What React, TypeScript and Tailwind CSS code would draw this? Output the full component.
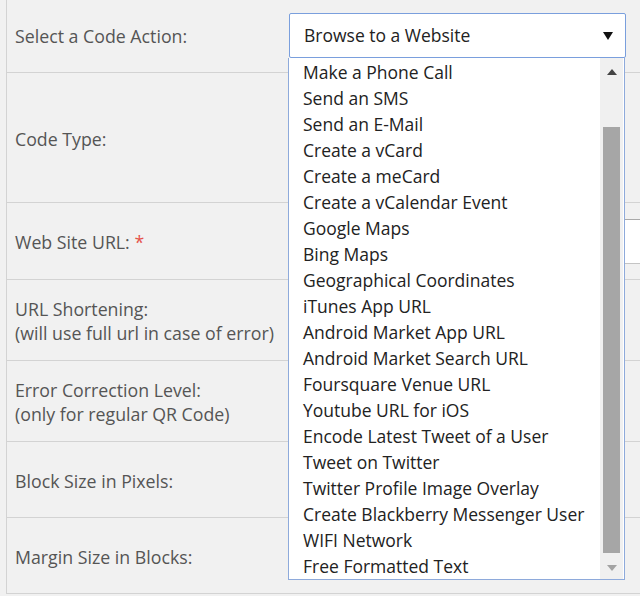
import React from 'react';

const actions = [
  'Make a Phone Call',
  'Send an SMS',
  'Send an E-Mail',
  'Create a vCard',
  'Create a meCard',
  'Create a vCalendar Event',
  'Google Maps',
  'Bing Maps',
  'Geographical Coordinates',
  'iTunes App URL',
  'Android Market App URL',
  'Android Market Search URL',
  'Foursquare Venue URL',
  'Youtube URL for iOS',
  'Encode Latest Tweet of a User',
  'Tweet on Twitter',
  'Twitter Profile Image Overlay',
  'Create Blackberry Messenger User',
  'WIFI Network',
  'Free Formatted Text',
];

function Row({ height, children, field }: { height: string; children: React.ReactNode; field?: React.ReactNode }) {
  return (
    <div className={`flex border-b border-[#d3d3d3] ${height}`}>
      <div className="w-[282px] shrink-0 flex flex-col justify-center pl-2 pt-[2px] text-[17.75px] leading-6 text-[#555]">
        {children}
      </div>
      <div className="flex-1 relative">{field}</div>
    </div>
  );
}

export default function App() {
  return (
    <div className="relative h-[596px] w-[640px] overflow-hidden bg-[#f1f1f1] font-['Open_Sans',sans-serif]">
      <div className="ml-[6px] border-l border-[#d3d3d3]">
        <Row
          height="h-[73px]"
          field={
            <div className="mt-[13px] flex h-[45px] w-[337px] items-center justify-between rounded-[2px] border border-[#7a9fdd] bg-white pl-[14px] pr-[12px] text-[17.5px] text-[#222]">
              <span>Browse to a Website</span>
              <svg width="10" height="8" viewBox="0 0 10 8">
                <path d="M0 0h10L5 8z" fill="#111" />
              </svg>
            </div>
          }
        >
          <span className="-mt-[2px]">Select a Code Action:</span>
        </Row>
        <Row height="h-[130px]">Code Type:</Row>
        <Row
          height="h-[77px]"
          field={
            <div className="mt-[16px] h-[45px] w-[400px] border border-[#c4c4c4] border-t-[#a9a9a9] bg-white" />
          }
        >
          <span>
            Web Site URL: <span className="text-[#e5534b]">*</span>
          </span>
        </Row>
        <Row height="h-[81px]">
          <span>URL Shortening:</span>
          <span>(will use full url in case of error)</span>
        </Row>
        <Row height="h-[81px]">
          <span>Error Correction Level:</span>
          <span>(only for regular QR Code)</span>
        </Row>
        <Row height="h-[76px]">Block Size in Pixels:</Row>
        <Row height="h-[76px]">Margin Size in Blocks:</Row>
      </div>

      {/* open option list of the code action select */}
      <div className="absolute left-[288px] top-[58px] flex h-[522px] w-[337px] border border-t-0 border-[#8eaadb] bg-white">
        <ul className="flex-1 pt-[1px] pl-[14px] text-[17.5px] text-[#222]">
          {actions.map((a) => (
            <li key={a} className="h-[26px] leading-[26px] whitespace-nowrap">
              {a}
            </li>
          ))}
        </ul>
        <div className="flex w-[23px] flex-col bg-[#f0f0f0] mr-[1px]">
          <div className="flex h-[28px] items-center justify-center">
            <svg width="10" height="6" viewBox="0 0 10 6">
              <path d="M5 0l5 6H0z" fill="#444" />
            </svg>
          </div>
          <div className="mx-[3px] mt-[41px] h-[426px] bg-[#a6a6a6]" />
          <div className="flex flex-1 items-center justify-center pt-1">
            <svg width="10" height="6" viewBox="0 0 10 6">
              <path d="M0 0h10L5 6z" fill="#a3a3a3" />
            </svg>
          </div>
        </div>
      </div>
    </div>
  );
}
